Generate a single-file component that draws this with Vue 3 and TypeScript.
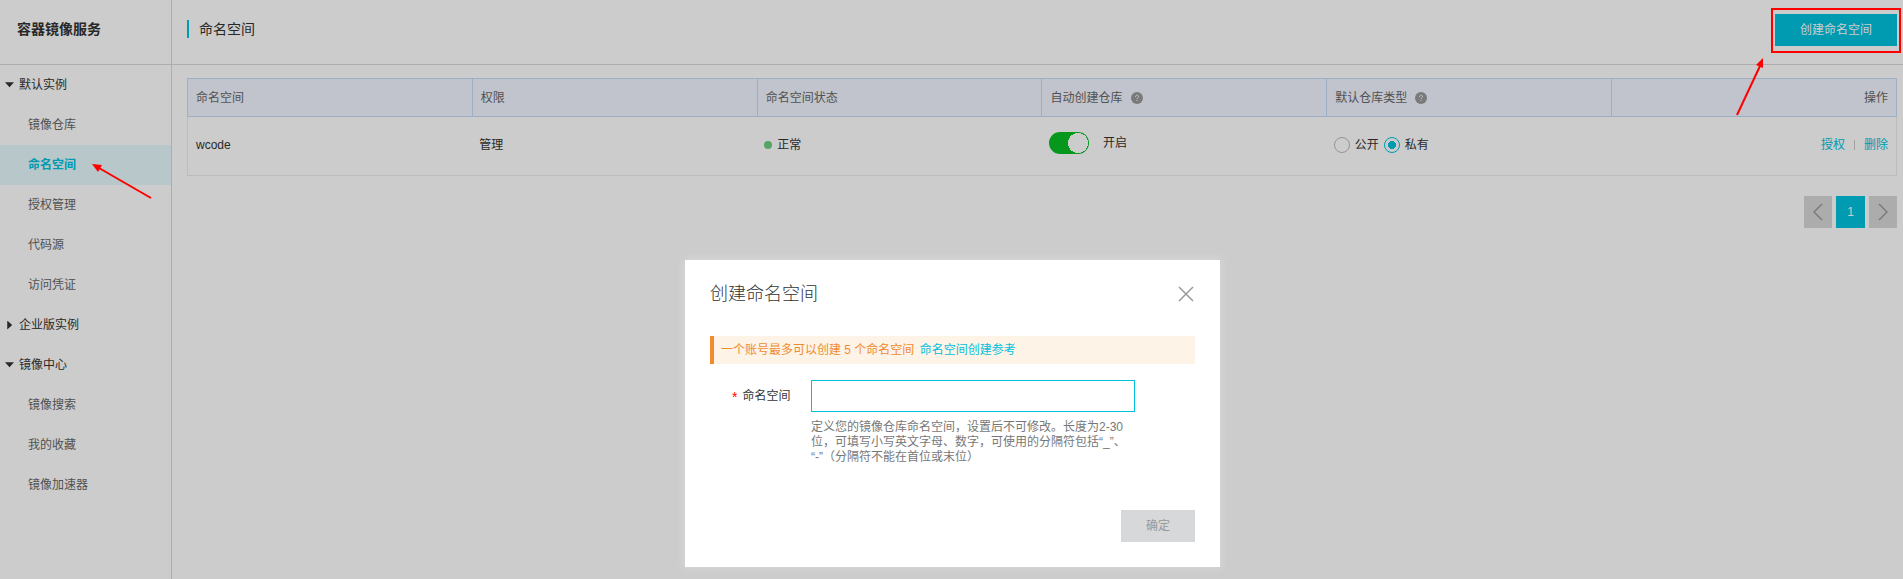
<script setup lang="ts">
import { ref } from 'vue'

interface NavItem { label: string; active?: boolean }
interface NavGroup { label: string; open: boolean; items: NavItem[] }

const groups: NavGroup[] = [
  {
    label: '默认实例',
    open: true,
    items: [
      { label: '镜像仓库' },
      { label: '命名空间', active: true },
      { label: '授权管理' },
      { label: '代码源' },
      { label: '访问凭证' },
    ],
  },
  { label: '企业版实例', open: false, items: [] },
  {
    label: '镜像中心',
    open: true,
    items: [{ label: '镜像搜索' }, { label: '我的收藏' }, { label: '镜像加速器' }],
  },
]

const columns: { label: string; help?: boolean; end?: boolean }[] = [
  { label: '命名空间' },
  { label: '权限' },
  { label: '命名空间状态' },
  { label: '自动创建仓库', help: true },
  { label: '默认仓库类型', help: true },
  { label: '操作', end: true },
]

const autoCreate = ref(true)
const repoType = ref('private')
const namespaceName = ref('')
</script>

<template>
  <div class="console">
    <nav class="sidebar">
      <h1 class="product">容器镜像服务</h1>
      <section v-for="group in groups" :key="group.label">
        <button type="button" class="group" :aria-expanded="group.open">
          <span class="caret" :class="{ open: group.open }"></span>{{ group.label }}
        </button>
        <a
          v-for="item in group.items"
          :key="item.label"
          href="#"
          class="item"
          :class="{ active: item.active }"
        >{{ item.label }}</a>
      </section>
    </nav>

    <main class="main">
      <header class="header">
        <h2 class="title">命名空间</h2>
        <button type="button" class="primary">创建命名空间</button>
      </header>

      <div class="content">
        <table class="table">
          <thead>
            <tr>
              <th v-for="col in columns" :key="col.label" :class="{ end: col.end }">
                <span class="head">
                  {{ col.label }}
                  <svg v-if="col.help" class="help" viewBox="0 0 12 12" aria-hidden="true">
                    <circle cx="6" cy="6" r="6" />
                    <path d="M4.500 4.800C4.500 2.800 7.500 2.800 7.500 4.600C7.500 5.700 6 5.700 6 7M6 8V9" />
                  </svg>
                </span>
              </th>
            </tr>
          </thead>
          <tbody>
            <tr>
              <td>wcode</td>
              <td>管理</td>
              <td><span class="status"><i class="dot"></i>正常</span></td>
              <td>
                <label class="switch">
                  <input v-model="autoCreate" type="checkbox" role="switch" />
                  <span>开启</span>
                </label>
              </td>
              <td>
                <div class="radios">
                  <label><input v-model="repoType" type="radio" name="repo" value="public" />公开</label>
                  <label><input v-model="repoType" type="radio" name="repo" value="private" />私有</label>
                </div>
              </td>
              <td class="end">
                <span class="actions"><a href="#">授权</a><i class="bar"></i><a href="#">删除</a></span>
              </td>
            </tr>
          </tbody>
        </table>

        <div class="pager">
          <button type="button" aria-label="上一页">
            <svg viewBox="0 0 10 18"><path d="M9 1L1 9L9 17" /></svg>
          </button>
          <button type="button" class="current">1</button>
          <button type="button" aria-label="下一页">
            <svg viewBox="0 0 10 18"><path d="M1 1L9 9L1 17" /></svg>
          </button>
        </div>
      </div>
    </main>

    <div class="backdrop">
      <form class="dialog" role="dialog" aria-labelledby="dialog-title" @submit.prevent>
        <header class="dialog-head">
          <h3 id="dialog-title">创建命名空间</h3>
          <button type="button" class="close" aria-label="关闭">
            <svg viewBox="0 0 16 16"><path d="M1 1L15 15M15 1L1 15" /></svg>
          </button>
        </header>
        <p class="notice">一个账号最多可以创建 5 个命名空间 <a href="#">命名空间创建参考</a></p>
        <div class="field">
          <label for="ns-name"><span class="star">*</span>命名空间</label>
          <div class="control">
            <input id="ns-name" v-model="namespaceName" type="text" />
            <p class="hint">定义您的镜像仓库命名空间，设置后不可修改。长度为2-30位，可填写小写英文字母、数字，可使用的分隔符包括“_”、<wbr />“-”（分隔符不能在首位或末位）</p>
          </div>
        </div>
        <footer class="dialog-foot">
          <button type="submit" disabled>确定</button>
        </footer>
      </form>
    </div>

    <div class="mark mark-box"></div>
    <svg class="mark mark-create" viewBox="0 0 30 60">
      <path class="shaft" d="M1 58L24 9" />
      <path class="tip" d="M27 1L27 11L23.500 9.500L20 8Z" />
    </svg>
    <svg class="mark mark-nav" viewBox="0 0 60 36">
      <path class="shaft" d="M59 34L7 4" />
      <path class="tip" d="M0 0L10 1L8 4.600L6 8Z" />
    </svg>
  </div>
</template>

<style>
body {
  margin: 0;
  background: #fff;
}
</style>

<style scoped>
.console {
  position: relative;
  display: flex;
  min-height: 100vh;
  font: 12px/18px "Liberation Sans", "Noto Sans CJK SC", sans-serif;
  color: #333;
}
* {
  box-sizing: border-box;
}
h1, h2, h3, p {
  margin: 0;
  font-weight: 400;
}
button {
  border: 0;
  padding: 0;
  font: inherit;
  color: inherit;
  background: none;
}
a {
  color: #00c1de;
  text-decoration: none;
}
.sidebar {
  flex: none;
  width: 172px;
  border-right: 1px solid #d9d9d9;
}
.product {
  height: 65px;
  padding: 20px 17px;
  border-bottom: 1px solid #d9d9d9;
  font-size: 14px;
  font-weight: 700;
}
.group {
  display: flex;
  align-items: center;
  gap: 5px;
  width: 100%;
  height: 40px;
  padding-left: 5px;
}
.caret {
  width: 9px;
  height: 9px;
  background: #333;
  clip-path: polygon(25% 0, 80% 50%, 25% 100%);
}
.caret.open {
  clip-path: polygon(0 20%, 100% 20%, 50% 75%);
}
.item {
  display: block;
  padding: 11px 28px;
  color: #666;
}
.item.active {
  background: #e6f9fd;
  color: #00c1de;
  font-weight: 700;
}
.main {
  flex: 1;
  min-width: 0;
}
.header {
  display: flex;
  align-items: flex-start;
  justify-content: space-between;
  height: 65px;
  padding: 14px 6px 0 15px;
  border-bottom: 1px solid #d9d9d9;
}
.title {
  margin-top: 6px;
  padding-left: 10px;
  border-left: 2px solid #00c1de;
  font-size: 14px;
}
.primary {
  width: 122px;
  height: 32px;
  background: #00c1de;
  color: #fff;
}
.content {
  padding: 13px 6px 0 15px;
}
.table {
  width: 100%;
  table-layout: fixed;
  border-collapse: collapse;
}
th {
  height: 38px;
  padding: 0 8px;
  border: 1px solid #c4dbf7;
  background: #f2f6ff;
  color: #666;
  font-weight: 400;
  text-align: left;
}
td {
  height: 59px;
  padding: 0 8px 2px 7px;
  border-bottom: 1px solid #ebecec;
}
td:first-child {
  padding-left: 8px;
  border-left: 1px solid #ebecec;
}
td:last-child {
  border-right: 1px solid #ebecec;
}
.end {
  text-align: right;
}
.head,
.status,
.switch,
.radios,
.radios label,
.actions {
  display: inline-flex;
  align-items: center;
}
.head {
  gap: 8px;
}
.help {
  width: 12px;
  height: 12px;
  fill: #999;
}
.help path {
  fill: none;
  stroke: #f2f6ff;
  stroke-width: 1;
}
.status {
  gap: 5px;
}
.dot {
  width: 8px;
  height: 8px;
  border-radius: 50%;
  background: #6ccf80;
}
.switch {
  gap: 14px;
  padding-top: 1px;
}
.switch input {
  appearance: none;
  width: 40px;
  height: 22px;
  margin: 0;
  border-radius: 11px;
  background: #d7d8d9;
}
.switch input:checked {
  background: radial-gradient(circle at 29px 11px, #fff 10px, #08be25 10px);
}
.radios {
  gap: 5px;
  padding-top: 4px;
}
.radios label {
  gap: 5px;
}
.radios input {
  appearance: none;
  width: 16px;
  height: 16px;
  margin: 0;
  border: 1px solid #bbb;
  border-radius: 50%;
}
.radios input:checked {
  border-color: #00c1de;
  background: radial-gradient(circle, #00c1de 4px, transparent 4px);
}
.bar {
  width: 1px;
  height: 10px;
  margin: 0 9px;
  background: #ccc;
}
.pager {
  display: flex;
  justify-content: flex-end;
  gap: 4px;
  margin-top: 20px;
}
.pager button {
  display: grid;
  place-items: center;
  width: 28px;
  height: 32px;
  background: #d7d8d9;
}
.pager .current {
  width: 29px;
  background: #00c1de;
  color: #fff;
}
.pager svg {
  width: 10px;
  height: 18px;
  fill: none;
  stroke: #999;
  stroke-width: 1.5;
}
.backdrop {
  position: absolute;
  inset: 0;
  display: flex;
  justify-content: center;
  align-items: flex-start;
  padding: 260px 0 0 2px;
  background: rgba(0, 0, 0, 0.2);
}
.dialog {
  width: 535px;
  padding: 20px 25px 25px;
  background: #fff;
  box-shadow: 0 0 8px 2px rgba(255, 255, 255, 0.2);
}
.dialog-head {
  display: flex;
  justify-content: space-between;
  align-items: center;
  height: 28px;
}
.dialog-head h3 {
  font-size: 18px;
  font-weight: 300;
}
.close {
  display: grid;
  padding: 1px;
}
.close svg {
  width: 16px;
  height: 16px;
  fill: none;
  stroke: #999;
  stroke-width: 1.5;
}
.notice {
  margin-top: 28px;
  padding: 5px 7px;
  border-left: 4px solid #f08c2e;
  background: #fdf3e7;
  color: #f08c2e;
}
.notice a {
  margin-left: 2px;
}
.field {
  display: flex;
  margin-top: 16px;
}
.field > label {
  flex: none;
  width: 101px;
  padding: 7px 0 7px 22px;
  white-space: nowrap;
}
.star {
  margin-right: 5px;
  color: #f00;
  font-size: 14px;
  vertical-align: -2px;
  line-height: 14px;
}
.control input {
  display: block;
  width: 324px;
  height: 32px;
  border: 1px solid #00c1de;
  outline: 0;
}
.hint {
  width: 324px;
  margin-top: 8px;
  color: #777;
  line-height: 15px;
  text-spacing-trim: space-all;
}
.dialog-foot {
  display: flex;
  justify-content: flex-end;
  margin-top: 45px;
}
.dialog-foot button {
  width: 74px;
  height: 32px;
  background: #d7d8d9;
  color: #999;
}
.mark {
  position: absolute;
  pointer-events: none;
}
.mark-box {
  top: 8px;
  right: 2px;
  width: 130px;
  height: 45px;
  border: 2px solid #f00;
}
.mark-create {
  top: 57px;
  right: 137px;
  width: 30px;
  height: 60px;
}
.mark-nav {
  top: 164px;
  left: 92px;
  width: 60px;
  height: 36px;
}
.shaft {
  fill: none;
  stroke: #f00;
  stroke-width: 2;
}
.tip {
  fill: #f00;
}
</style>
